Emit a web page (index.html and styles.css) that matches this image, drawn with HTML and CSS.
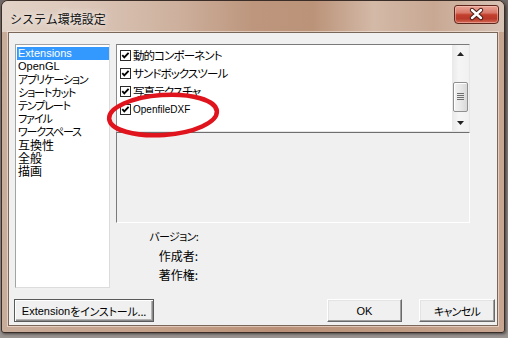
FILE: index.html
```html
<!DOCTYPE html>
<html lang="ja">
<head>
<meta charset="utf-8">
<title>システム環境設定</title>
<link rel="stylesheet" href="styles.css">
</head>
<body>
<svg class="defs" width="0" height="0" aria-hidden="true">
  <defs>
    <symbol id="cb" viewBox="0 0 11 11">
      <rect x="0.5" y="0.5" width="10" height="10" fill="#fff" stroke="#2b2b2b"/>
      <path d="M2.3 5.2 L4.3 7.3 L8.6 2.9" fill="none" stroke="#000" stroke-width="1.9"/>
    </symbol>
  </defs>
</svg>
<div class="window">
  <div class="titlebar">
    <span class="title">システム環境設定</span>
    <div class="close">
      <svg width="43" height="17" viewBox="0 0 43 17">
        <path d="M17 4 L26 12 M26 4 L17 12" stroke="#4a1d15" stroke-width="4.4" stroke-linecap="round" fill="none"/>
        <path d="M17 4 L26 12 M26 4 L17 12" stroke="#fff" stroke-width="2.4" stroke-linecap="round" fill="none"/>
      </svg>
    </div>
  </div>
  <div class="client">
    <div class="main">
      <ul class="categories">
        <li class="selected">Extensions</li>
        <li>OpenGL</li>
        <li class="kana">アプリケーション</li>
        <li class="kana">ショートカット</li>
        <li class="kana">テンプレート</li>
        <li class="kana">ファイル</li>
        <li class="kana">ワークスペース</li>
        <li class="ja">互換性</li>
        <li class="ja">全般</li>
        <li class="ja">描画</li>
      </ul>
      <div class="right">
        <div class="ext-list">
          <div class="ext-items">
            <div class="ext-row"><svg class="cb"><use href="#cb"/></svg><span class="kana">動的コンポーネント</span></div>
            <div class="ext-row"><svg class="cb"><use href="#cb"/></svg><span class="kana">サンドボックスツール</span></div>
            <div class="ext-row"><svg class="cb"><use href="#cb"/></svg><span class="kana">写真テクスチャ</span></div>
            <div class="ext-row"><svg class="cb"><use href="#cb"/></svg><span class="latin">OpenfileDXF</span></div>
          </div>
          <div class="scrollbar">
            <div class="sb-btn"><svg width="7" height="4" viewBox="0 0 7 4"><path d="M0 4 L3.5 0 L7 4 Z" fill="#222"/></svg></div>
            <div class="sb-thumb">
              <svg width="7" height="8" viewBox="0 0 7 8"><path d="M0 0.5 H7 M0 2.5 H7 M0 4.5 H7 M0 6.5 H7" stroke="#6f6f6f" stroke-width="1"/></svg>
            </div>
            <div class="sb-btn down"><svg width="7" height="4" viewBox="0 0 7 4"><path d="M0 0 L7 0 L3.5 4 Z" fill="#222"/></svg></div>
          </div>
        </div>
        <div class="desc"></div>
        <div class="info">
          <div class="info-row kana">バージョン:</div>
          <div class="info-row ja">作成者:</div>
          <div class="info-row ja">著作権:</div>
        </div>
      </div>
    </div>
    <div class="buttons">
      <div class="btn install">Extension<span class="kana">をインストール...</span></div>
      <div class="btn ok">OK</div>
      <div class="btn cancel kana">キャンセル</div>
    </div>
    <svg class="annotation" width="300" height="140" viewBox="0 0 300 140">
      <ellipse cx="154" cy="82" rx="54" ry="20" transform="rotate(-4 154 82)" fill="none" stroke="#e0141c" stroke-width="4.5"/>
    </svg>
  </div>
</div>
</body>
</html>
```

FILE: styles.css
```css
* { box-sizing: border-box; }

html, body { margin: 0; padding: 0; }

body {
  width: 508px;
  height: 338px;
  overflow: hidden;
  background: linear-gradient(180deg, #6f6866 0%, #9a9491 100%);
  font-family: "Liberation Sans", "Noto Sans CJK JP", sans-serif;
  font-size: 11px;
  color: #000;
}

.defs { position: absolute; }

.ja {
  font-family: "Noto Sans CJK JP", sans-serif;
  font-size: 12px;
  font-feature-settings: "palt";
}

.kana {
  font-family: "Noto Sans CJK JP", sans-serif;
  font-size: 11px;
  letter-spacing: -0.7px;
  font-feature-settings: "palt";
}

.window {
  margin-left: 1px;
  width: 504px;
  height: 333px;
  border: 1px solid #3b2e28;
  border-radius: 7px 7px 3px 3px;
  background: linear-gradient(90deg, #c9ad9b 0%, #c4a089 30%, #b99077 55%, #c09b84 80%, #c7a691 100%);
  display: flex;
  flex-direction: column;
  box-shadow: 1px 1px 3px rgba(0, 0, 0, 0.55);
}

.titlebar {
  height: 31px;
  flex: none;
  display: flex;
  justify-content: space-between;
  align-items: flex-start;
  padding: 0 5px 0 8px;
  border-radius: 6px 6px 0 0;
  background: linear-gradient(90deg, #e2d3c8 0%, #dcc8ba 15%, #cdb09d 35%, #bd967d 50%, #bb9379 62%, #d3b9a7 74%, #c8a893 86%, #d7c3b6 100%);
}

.title {
  margin-top: 10px;
  line-height: 16px;
  font-family: "Noto Sans CJK JP", sans-serif;
  font-size: 12px;
  color: #111;
  text-shadow: 0 0 6px rgba(255, 255, 255, 0.9), 0 0 10px rgba(255, 255, 255, 0.6);
}

.close {
  margin-top: 4px;
  width: 45px;
  height: 19px;
  border: 1px solid #5e281e;
  border-radius: 3px 3px 4px 4px;
  background: linear-gradient(180deg, #e9a596 0%, #d9796a 40%, #c2402c 52%, #b9392a 75%, #d46a55 100%);
  box-shadow: inset 0 0 0 1px rgba(255, 210, 200, 0.45);
  display: flex;
  align-items: center;
  justify-content: center;
}

.client {
  position: relative;
  flex: 1;
  margin: 0 6px 6px;
  background: #f0f0f0;
  border: 1px solid #7b665a;
  box-shadow: 0 0 0 1px rgba(255, 245, 238, 0.5);
  padding: 11px 0 0 5px;
  display: flex;
  flex-direction: column;
}

.main {
  display: flex;
  height: 244px;
  margin-left: 1px;
}

.categories {
  list-style: none;
  margin: 0;
  padding: 2px 0 0 0;
  width: 95px;
  height: 244px;
  background: #fff;
  border: 1px solid;
  border-color: #a3a3a3 #dcdcdc #dcdcdc #a3a3a3;
}

.categories li {
  height: 13px;
  line-height: 13px;
  margin-left: 1px;
  padding-left: 1px;
  white-space: nowrap;
}

.categories li.kana { letter-spacing: -1.1px; }

.categories li.selected {
  background: #3399ff;
  color: #fff;
}

.right {
  margin-left: 6px;
  width: 354px;
  display: flex;
  flex-direction: column;
}

.ext-list {
  height: 88px;
  display: flex;
  background: #fff;
  border: 1px solid;
  border-color: #7a7a7a #e6e6e6 #e6e6e6 #8a8a8a;
}

.ext-items {
  flex: 1;
  padding-top: 1px;
}

.ext-row {
  height: 18px;
  display: flex;
  align-items: center;
  padding-left: 3px;
  gap: 2px;
  white-space: nowrap;
}

.ext-row .kana {
  font-size: 11.5px;
  letter-spacing: -0.9px;
}

.ext-row .latin { font-size: 10px; }

.cb {
  width: 11px;
  height: 11px;
  flex: none;
}

.scrollbar {
  width: 17px;
  display: flex;
  flex-direction: column;
  background: linear-gradient(90deg, #e9e9e9, #f5f5f5 40%, #f1f1f1);
}

.sb-btn {
  height: 17px;
  display: flex;
  align-items: center;
  justify-content: center;
}

.sb-btn.down { margin-top: auto; }

.sb-thumb {
  margin: 20px 0 0 1px;
  width: 15px;
  height: 30px;
  border: 1px solid #8e8f8f;
  border-radius: 2px;
  background: linear-gradient(90deg, #f3f3f3 0%, #e8e8e8 50%, #d9d9d9 100%);
  box-shadow: inset 1px 1px 0 #fff;
  display: flex;
  align-items: center;
  justify-content: center;
}

.desc {
  height: 91px;
  background: #f0f0f0;
  border: 1px solid;
  border-color: #6f6f6f #ffffff #ffffff #7a7a7a;
}

.info {
  margin-top: 4px;
  width: 82px;
}

.info-row {
  height: 19px;
  line-height: 19px;
  text-align: right;
  white-space: nowrap;
}

.buttons {
  display: flex;
  margin-top: 11px;
  height: 23px;
}

.btn {
  height: 23px;
  display: flex;
  align-items: center;
  justify-content: center;
  background: #f0f0f0;
  border: 1px solid;
  border-color: #ffffff #696969 #696969 #ffffff;
  box-shadow: inset -1px -1px 0 #a0a0a0, inset 1px 1px 0 #e3e3e3;
  white-space: nowrap;
}

.install {
  width: 140px;
  border-color: #5a5a5a;
  box-shadow: inset 1px 1px 0 #fff, inset -1px -1px 0 #8a8a8a, inset -2px -2px 0 #b4b4b4;
}

.install .kana { letter-spacing: -0.2px; }

.ok {
  margin-left: auto;
  width: 75px;
}

.cancel {
  margin-left: 17px;
  margin-right: 2px;
  width: 76px;
}

.annotation {
  position: absolute;
  left: 0;
  top: 0;
  pointer-events: none;
  overflow: visible;
}
```
